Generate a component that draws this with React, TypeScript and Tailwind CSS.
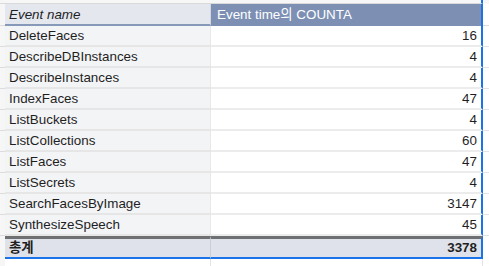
const rows: [string, number][] = [
  ['DeleteFaces', 16],
  ['DescribeDBInstances', 4],
  ['DescribeInstances', 4],
  ['IndexFaces', 47],
  ['ListBuckets', 4],
  ['ListCollections', 60],
  ['ListFaces', 47],
  ['ListSecrets', 4],
  ['SearchFacesByImage', 3147],
  ['SynthesizeSpeech', 45],
]

function Gutter({ className = '' }: { className?: string }) {
  return <div className={`w-[5px] shrink-0 bg-[#f6f6f6] border-b border-[#dcdcdc] ${className}`} />
}

export default function App() {
  return (
    <div
      className="w-[489px] h-[266px] overflow-hidden bg-white text-[13.4px] text-[#1f1f1f]"
      style={{ fontFamily: '"Liberation Sans", Arial, "Noto Sans CJK KR", sans-serif' }}
    >
      {/* row above the pivot */}
      <div className="flex h-[4px]">
        <Gutter />
        <div className="w-[206px] border-b border-[#d9d9d9] bg-[#f7f7f7]" />
        <div className="w-[272px] border-b border-[#d9d9d9] border-r-2 border-r-[#1a73e8] bg-[#f7f7f7]" />
        <div className="flex-1 bg-[#f7f7f7]" />
      </div>

      {/* header */}
      <div className="flex h-[22px]">
        <Gutter />
        <div className="w-[206px] flex items-center pl-[4px] pt-[2px] bg-[#e4e7ee] border-b-2 border-[#8799b8] border-r border-r-[#d4d7dd] italic">
          Event name
        </div>
        <div className="w-[272px] flex items-center pl-[6px] bg-[#7d90b4] text-white border-r-2 border-r-[#1a73e8]">
          Event time의 COUNTA
        </div>
        <div className="flex-1 border-b border-[#dcdcdc]" />
      </div>

      {rows.map(([name, count]) => (
        <div key={name} className="flex h-[21px]">
          <Gutter />
          <div className="w-[206px] flex items-center pl-[4px] pt-[2px] bg-[#f3f4f6] border-b-2 border-[#e6e6e6] border-r border-r-[#e8e8e8]">
            {name}
          </div>
          <div className="w-[272px] flex items-center justify-end pr-[4px] pt-[2px] bg-white border-b-2 border-[#ececec] border-r-2 border-r-[#1a73e8]">
            {count}
          </div>
          <div className="flex-1 border-b border-[#e3e3e3]" />
        </div>
      ))}

      {/* grand total */}
      <div className="flex h-[23px]">
        <Gutter className="border-b-0" />
        <div className="w-[206px] flex items-center pl-[4px] font-bold bg-[#dfe2ea] border-t-[3px] border-[#6f7072] border-b-2 border-b-[#1a73e8] border-r border-r-[#ccced3]">
          총계
        </div>
        <div className="w-[272px] flex items-center justify-end pr-[4px] font-bold bg-[#dfe2ea] border-t-[3px] border-[#6f7072] border-b-2 border-b-[#1a73e8] border-r-2 border-r-[#1a73e8]">
          3378
        </div>
        <div className="flex-1" />
      </div>

      {/* empty row below */}
      <div className="flex h-[8px]">
        <Gutter />
        <div className="w-[206px] border-r border-[#e3e3e3]" />
        <div className="w-[272px] border-r border-[#e3e3e3]" />
      </div>
    </div>
  )
}
